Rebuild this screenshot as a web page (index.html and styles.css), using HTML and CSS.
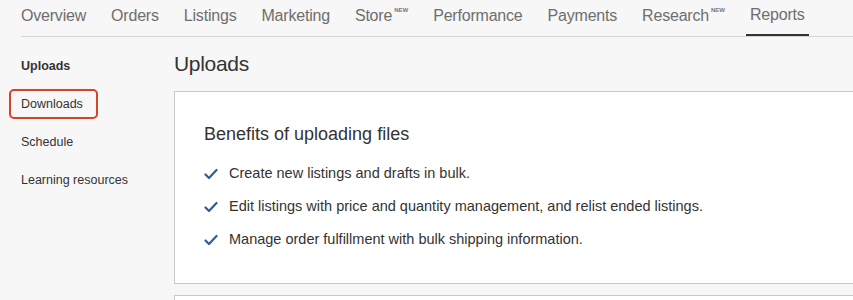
FILE: index.html
```html
<!DOCTYPE html>
<html lang="en">
<head>
    <meta charset="UTF-8">
    <meta name="viewport" content="width=device-width, initial-scale=1.0">
    <title>Reports - Uploads</title>
    <link rel="stylesheet" href="styles.css">
</head>
<body>
    <nav class="top-nav">
        <a href="#" class="nav-item">Overview</a>
        <a href="#" class="nav-item">Orders</a>
        <a href="#" class="nav-item">Listings</a>
        <a href="#" class="nav-item">Marketing</a>
        <a href="#" class="nav-item">Store<sup class="badge-new">NEW</sup></a>
        <a href="#" class="nav-item">Performance</a>
        <a href="#" class="nav-item">Payments</a>
        <a href="#" class="nav-item">Research<sup class="badge-new">NEW</sup></a>
        <a href="#" class="nav-item active">Reports</a>
    </nav>

    <div class="layout">
        <aside class="side-nav">
            <a href="#" class="side-item current">Uploads</a>
            <a href="#" class="side-item highlighted">Downloads</a>
            <a href="#" class="side-item">Schedule</a>
            <a href="#" class="side-item">Learning resources</a>
        </aside>

        <main class="content">
            <h1 class="page-title">Uploads</h1>

            <section class="card">
                <h2 class="card-title">Benefits of uploading files</h2>
                <ul class="benefits">
                    <li>
                        <svg class="check" viewBox="0 0 14 12" width="14" height="12"><path d="M1.5 6.5 L5 10 L12.5 2" fill="none" stroke="#2d5f96" stroke-width="2.2" stroke-linecap="round" stroke-linejoin="round"/></svg>
                        Create new listings and drafts in bulk.
                    </li>
                    <li>
                        <svg class="check" viewBox="0 0 14 12" width="14" height="12"><path d="M1.5 6.5 L5 10 L12.5 2" fill="none" stroke="#2d5f96" stroke-width="2.2" stroke-linecap="round" stroke-linejoin="round"/></svg>
                        Edit listings with price and quantity management, and relist ended listings.
                    </li>
                    <li>
                        <svg class="check" viewBox="0 0 14 12" width="14" height="12"><path d="M1.5 6.5 L5 10 L12.5 2" fill="none" stroke="#2d5f96" stroke-width="2.2" stroke-linecap="round" stroke-linejoin="round"/></svg>
                        Manage order fulfillment with bulk shipping information.
                    </li>
                </ul>
            </section>

            <section class="card card-next"></section>
        </main>
    </div>
</body>
</html>
```

FILE: styles.css
```css
* {
    margin: 0;
    padding: 0;
    box-sizing: border-box;
}

:root {
    --bg: #f7f7f7;
    --white: #ffffff;
    --text: #333333;
    --text-muted: #6e6e6e;
    --border: #d6d6d6;
    --border-dark: #c8c8c8;
    --accent-red: #d5432a;
    --check-blue: #2d5f96;
}

body {
    font-family: "Liberation Sans", Arial, sans-serif;
    background: var(--bg);
    color: var(--text);
    overflow: hidden;
}

a {
    text-decoration: none;
    color: inherit;
}

/* Navegação superior */
.top-nav {
    display: flex;
    gap: 25px;
    margin-left: 21px;
    height: 37px;
    border-bottom: 1px solid var(--border);
}

.nav-item {
    position: relative;
    display: flex;
    align-items: center;
    height: 36px;
    padding-bottom: 4px;
    font-size: 16px;
    font-weight: 300;
    color: var(--text-muted);
    letter-spacing: -0.2px;
}

.nav-item.active {
    padding: 0 4px 4px;
    margin-left: -4px;
    border-bottom: 2px solid #333;
}

.badge-new {
    font-size: 6px;
    font-weight: 700;
    color: #777;
    align-self: flex-start;
    margin-top: 7px;
    margin-left: 2px;
    letter-spacing: 0;
}

/* Layout */
.layout {
    display: flex;
}

.side-nav {
    width: 174px;
    flex-shrink: 0;
    display: flex;
    flex-direction: column;
    align-items: flex-start;
    padding: 14px 0 0 9px;
    gap: 8px;
}

.side-item {
    font-size: 12.5px;
    color: var(--text);
    padding: 6px 10px;
    border: 2px solid transparent;
    border-radius: 5px;
}

.side-item.current {
    font-weight: 700;
}

.side-item.highlighted {
    border-color: var(--accent-red);
    padding-right: 13px;
}

.content {
    flex: 1;
    min-width: 0;
}

.page-title {
    font-size: 21px;
    font-weight: 300;
    color: var(--text);
    margin: 15px 0 15px 0;
    letter-spacing: -0.3px;
}

.card {
    background: var(--white);
    border: 1px solid var(--border-dark);
    border-right: none;
    padding: 32px 29px 35px;
}

.card-title {
    font-size: 18px;
    font-weight: 400;
    color: var(--text);
    margin-bottom: 20px;
}

.benefits {
    list-style: none;
    display: flex;
    flex-direction: column;
    gap: 16px;
}

.benefits li {
    display: flex;
    align-items: center;
    gap: 11px;
    font-size: 14.5px;
    line-height: 17px;
    color: var(--text);
}

.check {
    flex-shrink: 0;
}

.card-next {
    margin-top: 11px;
    height: 40px;
    padding: 0;
}
```
